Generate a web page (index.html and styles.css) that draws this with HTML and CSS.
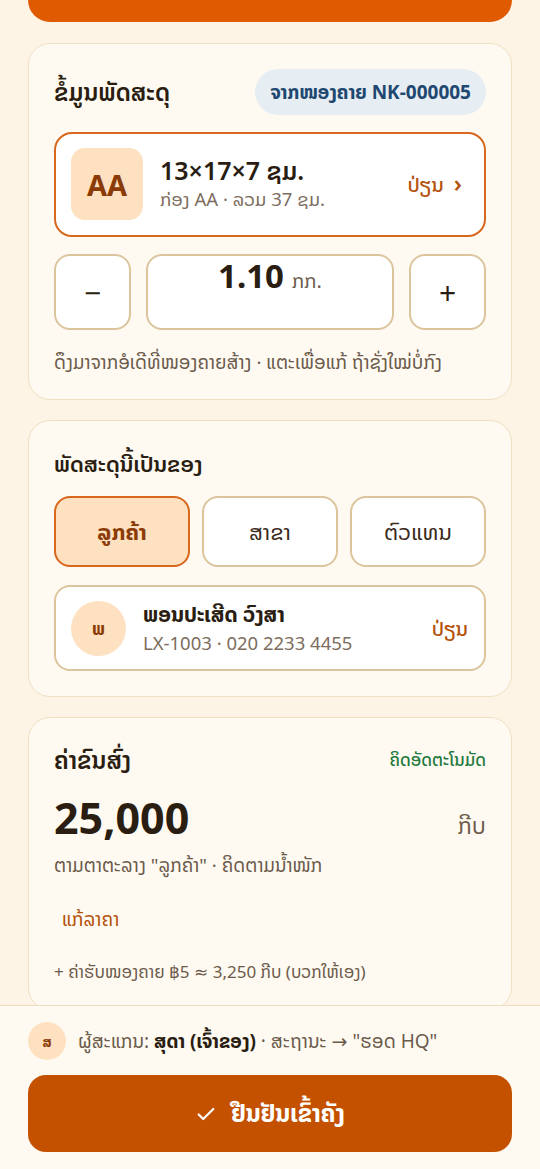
FILE: index.html
```html
<!DOCTYPE html>
<html lang="lo">
<head>
    <meta charset="UTF-8">
    <meta name="viewport" content="width=device-width, initial-scale=1.0">
    <title>ຮັບພັດສະດຸເຂົ້າຄັງ</title>
    <link rel="stylesheet" href="styles.css">
</head>
<body>
    <div class="top-bar"></div>

    <section class="card">
        <div class="card-head">
            <h2 class="title-lg">ຂໍ້ມູນພັດສະດຸ</h2>
            <span class="badge">ຈາກໜອງຄາຍ NK-000005</span>
        </div>
        <div class="package">
            <div class="package-code">AA</div>
            <div class="package-info">
                <div class="package-size">13×17×7 ຊມ.</div>
                <div class="package-sub">ກ່ອງ AA · ລວມ 37 ຊມ.</div>
            </div>
            <div class="link">ປ່ຽນ <span class="chev">›</span></div>
        </div>
        <div class="stepper">
            <div class="step-btn">−</div>
            <div class="step-value"><b>1.10</b> <span>ກກ.</span></div>
            <div class="step-btn">+</div>
        </div>
        <p class="hint big">ດຶງມາຈາກອໍເດີທີ່ໜອງຄາຍສ້າງ · ແຕະເພື່ອແກ້ ຖ້າຊັ່ງໃໝ່ບໍ່ກົງ</p>
    </section>

    <section class="card">
        <div class="card-head">
            <h2>ພັດສະດຸນີ້ເປັນຂອງ</h2>
        </div>
        <div class="segments">
            <div class="segment active">ລູກຄ້າ</div>
            <div class="segment">ສາຂາ</div>
            <div class="segment">ຕົວແທນ</div>
        </div>
        <div class="person">
            <div class="avatar">ພ</div>
            <div class="person-info">
                <div class="person-name">ພອນປະເສີດ ວົງສາ</div>
                <div class="person-sub">LX-1003 · 020 2233 4455</div>
            </div>
            <div class="link">ປ່ຽນ</div>
        </div>
    </section>

    <section class="card last">
        <div class="card-head">
            <h2 class="title-lg">ຄ່າຂົນສົ່ງ</h2>
            <span class="auto">ຄິດອັດຕະໂນມັດ</span>
        </div>
        <div class="amount">
            <span class="amount-num">25,000</span>
            <span class="amount-unit">ກີບ</span>
        </div>
        <p class="hint big">ຕາມຕາຕະລາງ "ລູກຄ້າ" · ຄິດຕາມນ້ຳໜັກ</p>
        <div class="edit-price">ແກ້ລາຄາ</div>
        <p class="hint">+ ຄ່າຮັບໜອງຄາຍ ฿5 ≈ 3,250 ກີບ (ບວກໃຫ້ເອງ)</p>
    </section>

    <footer class="footer">
        <div class="scanner">
            <div class="avatar small">ສ</div>
            <div>ຜູ້ສະແກນ: <b>ສຸດາ (ເຈົ້າຂອງ)</b> · ສະຖານະ → "ຮອດ HQ"</div>
        </div>
        <button class="confirm">
            <svg width="22" height="22" viewBox="0 0 24 24" fill="none" stroke="#fff" stroke-width="2.4" stroke-linecap="round" stroke-linejoin="round"><path d="M4 12.5l5 5L20 6.5"/></svg>
            ຢືນຢັນເຂົ້າຄັງ
        </button>
    </footer>
</body>
</html>
```

FILE: styles.css
```css
body {
    margin: 0;
    padding: 0 28px 180px;
    font-family: "Noto Sans", "Noto Sans Lao", "Noto Sans Lao UI", "DejaVu Sans", sans-serif;
    background-color: #fdf4e6;
    color: #2a1d12;
}
.top-bar {
    height: 22px;
    background-color: #e05a00;
    border-radius: 0 0 22px 22px;
    margin-bottom: 21px;
}
.card {
    background-color: #fffaf1;
    border: 1px solid #f0e0c3;
    border-radius: 22px;
    padding: 25px;
    margin-bottom: 20px;
}
.card-head {
    display: flex;
    justify-content: space-between;
    align-items: center;
}
.card-head h2 {
    margin: 0;
    font-size: 22px;
    font-weight: 600;
    line-height: 34px;
}
.card-head h2.title-lg {
    font-size: 24px;
}
.badge {
    background-color: #e6eef3;
    color: #1f4870;
    font-weight: 700;
    font-size: 19px;
    padding: 0 15px;
    height: 46px;
    display: flex;
    align-items: center;
    border-radius: 23px;
}
.package {
    margin-top: 17px;
    display: flex;
    align-items: center;
    background-color: #fff;
    border: 2px solid #d8681e;
    border-radius: 18px;
    padding: 14px 22px 15px 15px;
}
.package-code {
    width: 72px;
    height: 72px;
    border-radius: 14px;
    background-color: #fde1c0;
    color: #8a3b06;
    font-weight: 700;
    font-size: 29px;
    display: flex;
    align-items: center;
    justify-content: center;
    flex-shrink: 0;
}
.package-info {
    margin-left: 17px;
    flex: 1;
}
.package-size {
    font-size: 25px;
    font-weight: 600;
    line-height: 30px;
}
.package-sub, .person-sub {
    font-size: 18.5px;
    color: #7d6d5e;
    line-height: 28px;
}
.link {
    color: #b4520c;
    font-size: 20px;
    font-weight: 500;
    display: flex;
    align-items: center;
    gap: 10px;
}
.chev {
    font-size: 24px;
    font-weight: 600;
    margin-top: -3px;
}
.stepper {
    display: flex;
    gap: 15px;
    margin-top: 17px;
}
.step-btn, .step-value {
    height: 72px;
    border: 2px solid #dcc59c;
    border-radius: 16px;
    background-color: #fff;
    display: flex;
    align-items: center;
    justify-content: center;
}
.step-btn {
    width: 73px;
    font-size: 30px;
    color: #2a1d12;
}
.step-value {
    flex: 1;
    align-items: baseline;
    gap: 8px;
}
.step-value b {
    font-size: 33px;
    line-height: 40px;
}
.step-value span {
    font-size: 20px;
    color: #6e5e4f;
}
.hint {
    margin: 20px 0 0;
    font-size: 17px;
    color: #6b5b4c;
    line-height: 24px;
}
.hint.big {
    font-size: 18.8px;
}
.segments {
    display: grid;
    grid-template-columns: 1fr 1fr 1fr;
    gap: 12px;
    margin-top: 16px;
}
.segment {
    height: 67px;
    border: 2px solid #dcc59c;
    border-radius: 16px;
    background-color: #fff;
    display: flex;
    align-items: center;
    justify-content: center;
    font-size: 22px;
    color: #3a2a1c;
}
.segment.active {
    background-color: #fde1c0;
    border-color: #d8681e;
    color: #8a3b06;
    font-weight: 700;
}
.person {
    margin-top: 18px;
    display: flex;
    align-items: center;
    background-color: #fff;
    border: 2px solid #dcc59c;
    border-radius: 16px;
    padding: 12px 16px 12px 15px;
}
.avatar {
    width: 55px;
    height: 55px;
    border-radius: 50%;
    background-color: #fde1c0;
    color: #8a3b06;
    font-weight: 700;
    font-size: 18px;
    display: flex;
    align-items: center;
    justify-content: center;
    flex-shrink: 0;
}
.person-info {
    margin-left: 17px;
    flex: 1;
}
.person-name {
    font-size: 21px;
    font-weight: 700;
    line-height: 30px;
}
.auto {
    color: #1f7a3f;
    font-size: 17px;
    font-weight: 500;
}
.amount {
    display: flex;
    justify-content: space-between;
    align-items: baseline;
    margin-top: 13px;
}
.amount-num {
    font-size: 43px;
    font-weight: 700;
    line-height: 56px;
}
.amount-unit {
    font-size: 23px;
    color: #6e5e4f;
}
.amount + .hint {
    margin-top: 7px;
}
.edit-price {
    color: #b4520c;
    font-size: 19px;
    padding: 0 8px;
    margin-top: 30px;
    line-height: 24px;
}
.edit-price + .hint {
    margin-top: 29px;
}
.footer {
    position: fixed;
    left: 0;
    right: 0;
    bottom: 0;
    background-color: #fffaf1;
    border-top: 1px solid #ecdcc0;
    padding: 16px 28px 17px;
}
.scanner {
    display: flex;
    align-items: center;
    gap: 12px;
    font-size: 19px;
    color: #6b5b4c;
}
.scanner b {
    color: #2a1d12;
}
.avatar.small {
    width: 38px;
    height: 38px;
    font-size: 14px;
}
.confirm {
    margin-top: 15px;
    width: 100%;
    height: 77px;
    border: none;
    border-radius: 18px;
    background-color: #c45100;
    color: #fff;
    font-family: inherit;
    font-size: 24px;
    font-weight: 700;
    display: flex;
    align-items: center;
    justify-content: center;
    gap: 14px;
}
```
